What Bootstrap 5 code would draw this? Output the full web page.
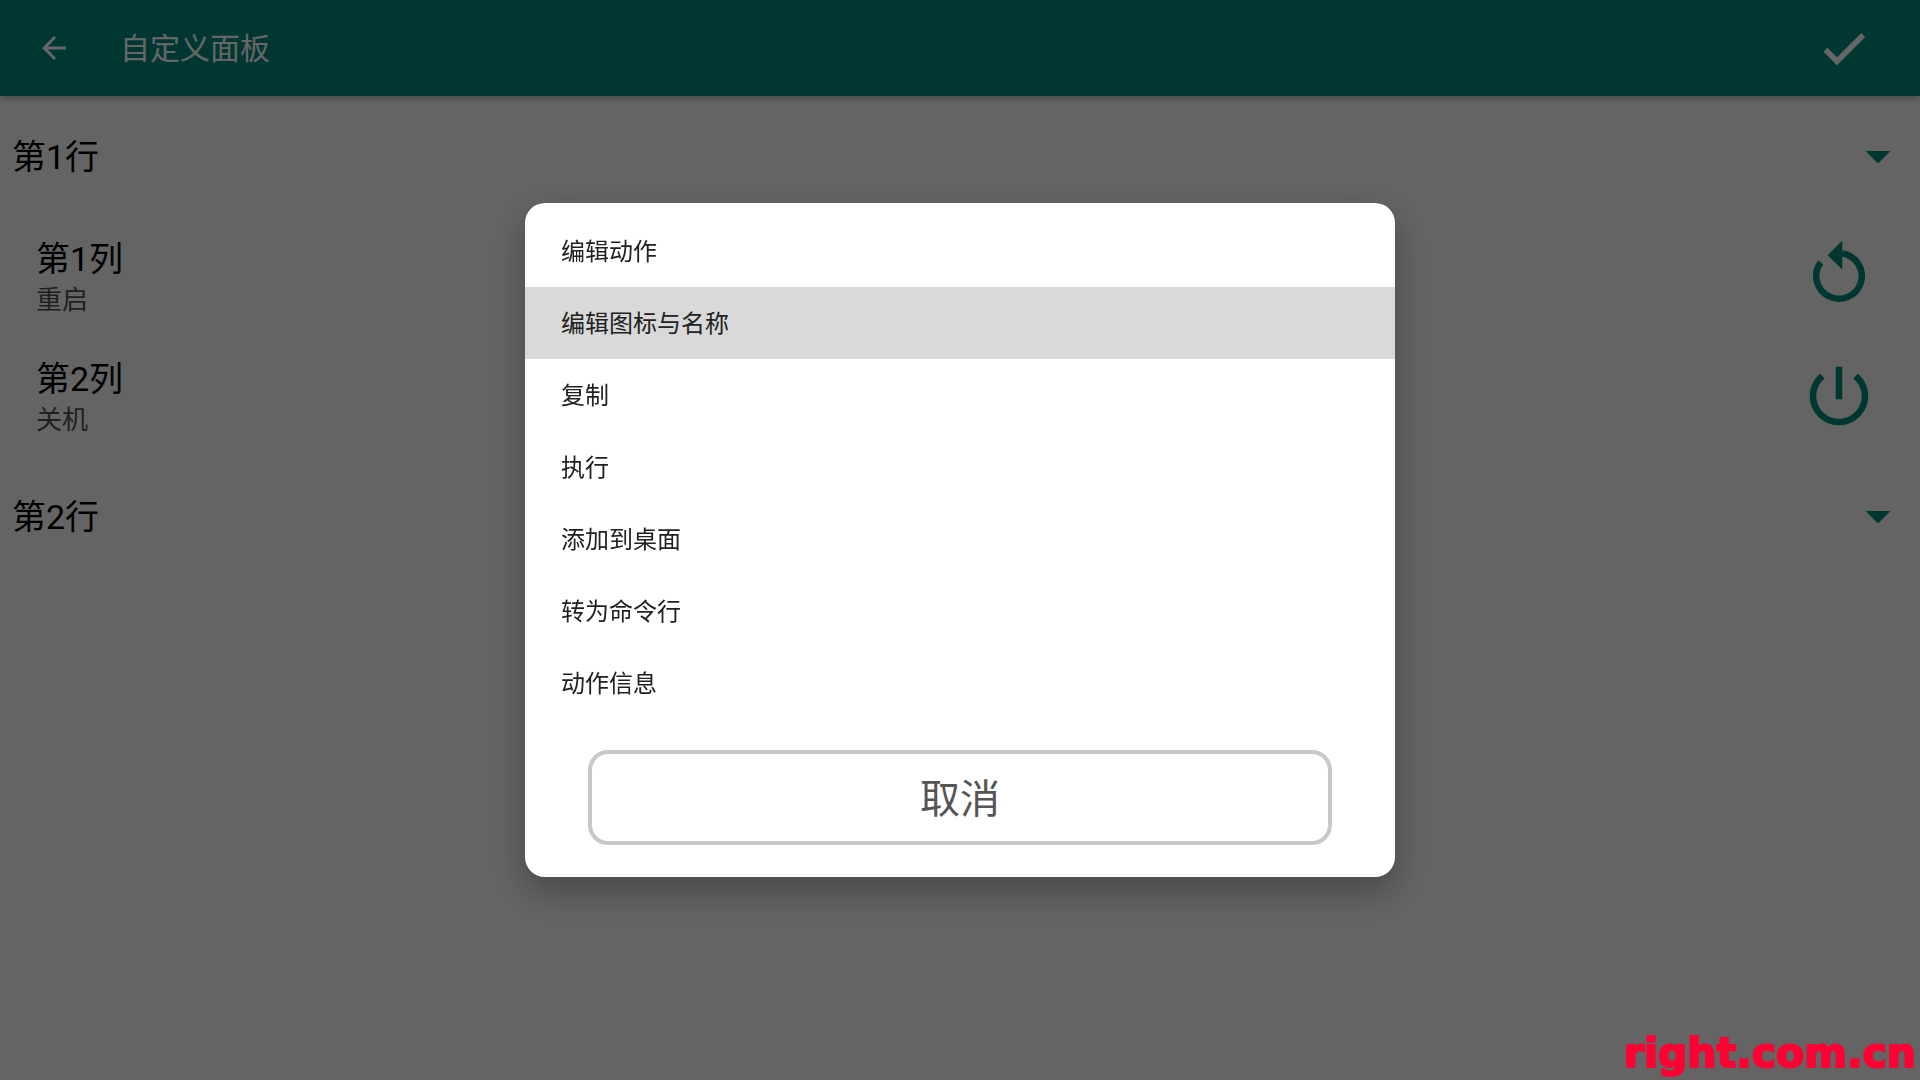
<!DOCTYPE html>
<html lang="zh-CN">
<head>
<meta charset="utf-8">
<meta name="viewport" content="width=device-width, initial-scale=1">
<title>自定义面板</title>
<link href="https://cdn.jsdelivr.net/npm/bootstrap@5.3.0/dist/css/bootstrap.min.css" rel="stylesheet">
<style>
  :root { --teal: #00897b; }
  body { font-family: Roboto, "Noto Sans CJK SC", sans-serif; background: #fafafa; color: #000; }
  button, a { font-family: inherit; }
  svg { display: block; fill: currentColor; flex: none; }
  .app-bar { height: 96px; background: var(--teal); padding: 0 48px 0 36px; box-shadow: 0 2px 6px rgba(0, 0, 0, .3); position: relative; }
  .app-title { font-size: 30px; line-height: 40px; margin: 0 0 0 48px; padding-top: 2px; font-weight: 400; }
  .plain-btn { background: none; border: 0; padding: 0; color: inherit; text-align: left; }
  .panel-line { height: 120px; padding: 0 12px; }
  .panel-cell { height: 120px; padding: 0 42px 0 36px; }
  .line-title { font-size: 34px; line-height: 44px; padding-top: 2px; }
  .line-sub { font-size: 26px; line-height: 38px; color: #505050; }
  .cell-text { padding-top: 2px; }
  .teal-icon { color: var(--teal); }
  .modal-backdrop { --bs-backdrop-opacity: .6; }
  .action-dialog { max-width: 870px; }
  .action-dialog .modal-content { border: 0; border-radius: 20px; padding: 12px 0 32px; box-shadow: 0 14px 36px rgba(0, 0, 0, .3); }
  .action-list .list-group-item { border: 0; height: 72px; padding: 2px 36px 0; font-size: 24px; line-height: 32px; color: #212121; background: transparent; }
  .action-list .list-group-item.active { background: #d9d9d9; margin: 0; }
  .cancel-btn { margin: 31px 63px 0; height: 95px; padding: 4px 0 0; border: 4px solid #c8c8c8; border-radius: 20px; background: #fff; color: #555; font-size: 40px; line-height: 52px; }
  .site-mark { right: 4px; bottom: 0; z-index: 1080; font: 700 41px/54px "DejaVu Sans", sans-serif; color: #ff0033; -webkit-text-stroke: 2px #ff0033; }
</style>
</head>
<body>
<header class="app-bar d-flex align-items-center text-white">
  <button class="plain-btn" type="button" aria-label="返回">
    <svg width="36" height="36" viewBox="0 0 24 24"><path d="M20 11H7.83l5.59-5.59L12 4l-8 8 8 8 1.41-1.41L7.83 13H20z"/></svg>
  </button>
  <h1 class="app-title">自定义面板</h1>
  <button class="plain-btn ms-auto" type="button" aria-label="完成">
    <svg width="56" height="56" viewBox="0 0 24 24"><path d="M9 16 4.9 11.9l-1.7 1.7L9 19.4 21.1 7.3l-1.7-1.7z"/></svg>
  </button>
</header>

<main>
  <button class="plain-btn panel-line w-100 d-flex align-items-center justify-content-between" type="button">
    <span class="line-title">第1行</span>
    <svg class="teal-icon" width="60" height="60" viewBox="0 0 24 24"><path d="M7 10l5 5 5-5z"/></svg>
  </button>
  <button class="plain-btn panel-cell w-100 d-flex align-items-center justify-content-between" type="button">
    <span class="cell-text d-flex flex-column">
      <span class="line-title">第1列</span>
      <span class="line-sub">重启</span>
    </span>
    <svg class="teal-icon" width="78" height="78" viewBox="0 0 24 24">
      <path d="M13 5.07A7 7 0 1 1 6.4 7.8" fill="none" stroke="currentColor" stroke-width="2"/>
      <path d="M13 1.1v8.9L8.5 5.6z"/>
    </svg>
  </button>
  <button class="plain-btn panel-cell w-100 d-flex align-items-center justify-content-between" type="button">
    <span class="cell-text d-flex flex-column">
      <span class="line-title">第2列</span>
      <span class="line-sub">关机</span>
    </span>
    <svg class="teal-icon" width="78" height="78" viewBox="0 0 24 24"><path d="M13 3h-2v10h2V3zm4.83 2.17-1.42 1.42C17.99 7.86 19 9.81 19 12c0 3.87-3.13 7-7 7s-7-3.13-7-7c0-2.19 1.01-4.14 2.58-5.42L6.17 5.17C4.23 6.82 3 9.26 3 12c0 4.97 4.03 9 9 9s9-4.03 9-9c0-2.74-1.23-5.18-3.17-6.83z"/></svg>
  </button>
  <button class="plain-btn panel-line w-100 d-flex align-items-center justify-content-between" type="button">
    <span class="line-title">第2行</span>
    <svg class="teal-icon" width="60" height="60" viewBox="0 0 24 24"><path d="M7 10l5 5 5-5z"/></svg>
  </button>
</main>

<div class="modal-backdrop show"></div>
<div class="modal d-block" role="dialog" aria-modal="true" aria-label="动作菜单">
  <div class="modal-dialog modal-dialog-centered action-dialog">
    <div class="modal-content">
      <div class="list-group list-group-flush action-list">
        <button type="button" class="list-group-item list-group-item-action">编辑动作</button>
        <button type="button" class="list-group-item list-group-item-action active">编辑图标与名称</button>
        <button type="button" class="list-group-item list-group-item-action">复制</button>
        <button type="button" class="list-group-item list-group-item-action">执行</button>
        <button type="button" class="list-group-item list-group-item-action">添加到桌面</button>
        <button type="button" class="list-group-item list-group-item-action">转为命令行</button>
        <button type="button" class="list-group-item list-group-item-action">动作信息</button>
      </div>
      <button type="button" class="cancel-btn">取消</button>
    </div>
  </div>
</div>
<span class="site-mark position-fixed">right.com.cn</span>
<script src="https://cdn.jsdelivr.net/npm/bootstrap@5.3.0/dist/js/bootstrap.bundle.min.js"></script>
</body>
</html>
